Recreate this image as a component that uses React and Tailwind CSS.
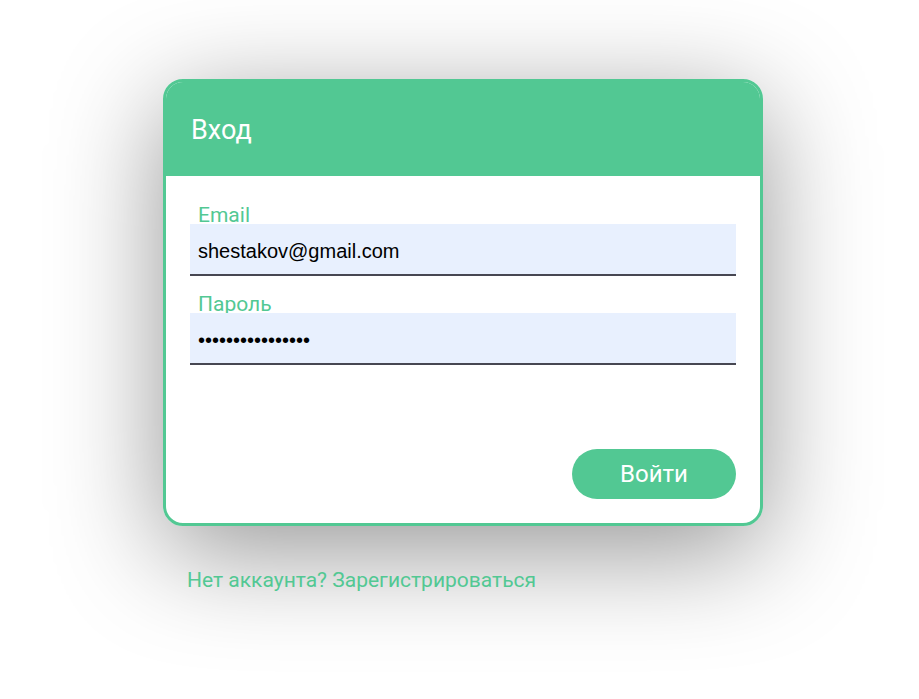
export default function App() {
  return (
    <div className="min-h-screen bg-white pt-[79px] pl-[163px]" style={{ fontFamily: "Roboto, 'Noto Sans', sans-serif" }}>
      <div className="w-[600px] rounded-[20px] shadow-[0_25px_110px_rgba(0,0,0,0.42)]">
        {/* Card */}
        <div className="rounded-[20px] border-[3px] border-[#52c893] bg-white overflow-hidden">
          <div className="h-[94px] bg-[#52c893] pl-[25px] flex items-center">
            <h1 className="text-[27px] leading-none text-white pt-[2px]">Вход</h1>
          </div>
          <form className="px-[24px] pt-[29px] pb-[24px] flex flex-col">
            <label className="block -mb-[2px] pl-[8px] text-[21px] leading-none text-[#52c893]">Email</label>
            <input
              type="text"
              defaultValue="shestakov@gmail.com"
              className="h-[52px] w-full bg-[#e8f0fe] border-b-2 border-[#474752] pl-[8px] pt-[4px] text-[20px] text-black outline-none"
              style={{ fontFamily: "'Liberation Sans', Arial, sans-serif" }}
            />
            <label className="block mt-[18px] -mb-[2px] pl-[8px] text-[21px] leading-none text-[#52c893]">Пароль</label>
            <input
              type="password"
              defaultValue="shestakov1234567"
              className="h-[52px] w-full bg-[#e8f0fe] border-b-2 border-[#474752] pl-[8px] pt-[4px] text-[20px] text-black outline-none"
              style={{ fontFamily: "'Liberation Sans', Arial, sans-serif" }}
            />
            <div className="flex justify-end mt-[84px]">
              <button type="button" className="w-[164px] h-[50px] rounded-full bg-[#52c893] text-white text-[24px] leading-none">
                Войти
              </button>
            </div>
          </form>
        </div>
      </div>
      <a href="#" className="block mt-[44px] ml-[24px] text-[21px] leading-none text-[#52c893]">
        Нет аккаунта? Зарегистрироваться
      </a>
    </div>
  );
}
